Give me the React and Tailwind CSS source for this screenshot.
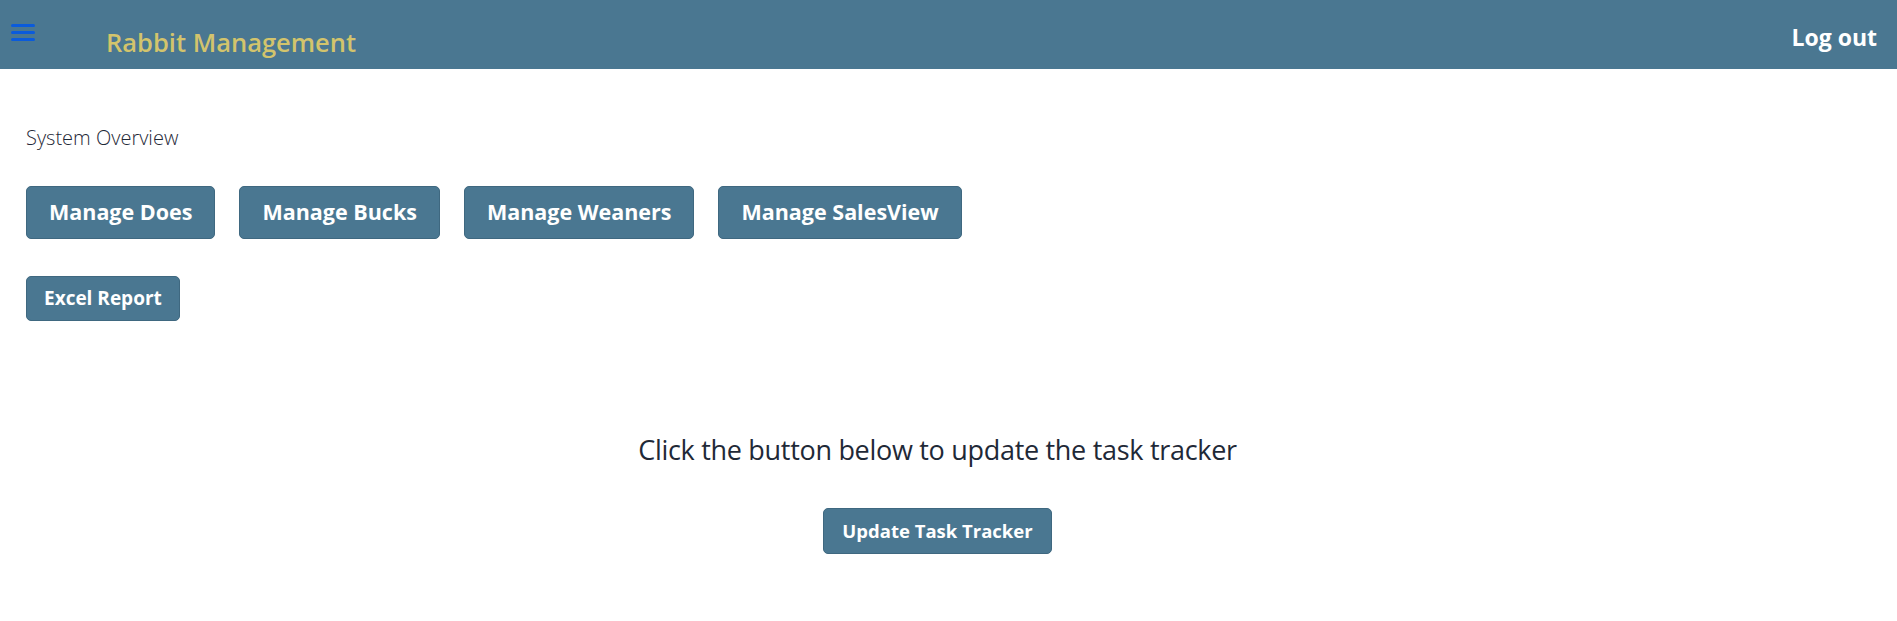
import React from "react";

const btn =
    "rounded-[5px] border border-[#3f6880] bg-[#4a7791] font-bold text-white";

export default function App() {
    return (
        <div className="min-h-screen bg-white font-['Open_Sans',sans-serif]">
            {/* header */}
            <header className="flex h-[69px] items-start justify-between bg-[#4a7791]">
                <div className="flex items-start">
                    <button className="ml-[11px] mt-[24px] flex w-[24px] flex-col gap-[4px]">
                        <span className="h-[3px] w-full rounded bg-[#0a5bdc]"></span>
                        <span className="h-[3px] w-full rounded bg-[#0a5bdc]"></span>
                        <span className="h-[3px] w-full rounded bg-[#0a5bdc]"></span>
                    </button>
                    <h1 className="ml-[71px] mt-[24px] text-[25.5px] font-semibold leading-[36px] text-[#d3c46c]">
                        Rabbit Management
                    </h1>
                </div>
                <button className="mr-[20px] mt-[22px] text-[23px] font-bold leading-[30px] text-white">
                    Log out
                </button>
            </header>

            {/* overview */}
            <div className="px-[26px] pt-[54px]">
                <p className="text-[20px] font-light leading-[30px] text-[#1f2937]">
                    System Overview
                </p>
                <div className="mt-[33px] flex gap-[24px]">
                    <button className={`${btn} h-[53px] px-[22px] text-[21.5px]`}>Manage Does</button>
                    <button className={`${btn} h-[53px] px-[22px] text-[21.5px]`}>Manage Bucks</button>
                    <button className={`${btn} h-[53px] px-[22px] text-[21.5px]`}>Manage Weaners</button>
                    <button className={`${btn} h-[53px] px-[22px] text-[21.5px]`}>Manage SalesView</button>
                </div>
                <div className="mt-[37px]">
                    <button className={`${btn} h-[45px] px-[17px] text-[19px]`}>Excel Report</button>
                </div>
            </div>

            {/* task tracker */}
            <div className="mt-[110px] flex w-[1875px] flex-col items-center">
                <p className="text-[27px] font-medium leading-[38px] tracking-[-0.3px] text-[#1f2937]">
                    Click the button below to update the task tracker
                </p>
                <button className={`${btn} mt-[39px] h-[46px] px-[18px] text-[18.5px]`}>
                    Update Task Tracker
                </button>
            </div>
        </div>
    );
}
